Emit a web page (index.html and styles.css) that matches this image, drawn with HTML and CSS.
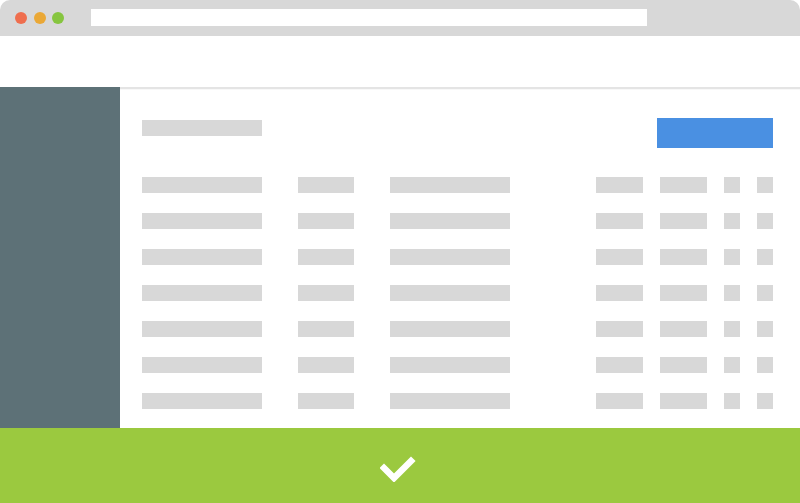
FILE: index.html
```html
<!DOCTYPE html>
<html>
<head>
<meta charset="utf-8">
<link rel="stylesheet" href="styles.css">
</head>
<body>
<div class="window">
  <div class="chrome">
    <div class="dots">
      <span class="dot red"></span>
      <span class="dot orange"></span>
      <span class="dot green"></span>
    </div>
    <div class="address"></div>
  </div>
  <div class="header"></div>
  <div class="body">
    <div class="sidebar"></div>
    <div class="main">
      <div class="toolbar">
        <div class="title bar"></div>
        <div class="button"></div>
      </div>
      <div class="rows">
        <div class="row"><div class="left"><span class="bar w120"></span><span class="bar w56"></span><span class="bar w120"></span></div><div class="right"><span class="bar w47"></span><span class="bar w47"></span><span class="bar w16"></span><span class="bar w16"></span></div></div>
        <div class="row"><div class="left"><span class="bar w120"></span><span class="bar w56"></span><span class="bar w120"></span></div><div class="right"><span class="bar w47"></span><span class="bar w47"></span><span class="bar w16"></span><span class="bar w16"></span></div></div>
        <div class="row"><div class="left"><span class="bar w120"></span><span class="bar w56"></span><span class="bar w120"></span></div><div class="right"><span class="bar w47"></span><span class="bar w47"></span><span class="bar w16"></span><span class="bar w16"></span></div></div>
        <div class="row"><div class="left"><span class="bar w120"></span><span class="bar w56"></span><span class="bar w120"></span></div><div class="right"><span class="bar w47"></span><span class="bar w47"></span><span class="bar w16"></span><span class="bar w16"></span></div></div>
        <div class="row"><div class="left"><span class="bar w120"></span><span class="bar w56"></span><span class="bar w120"></span></div><div class="right"><span class="bar w47"></span><span class="bar w47"></span><span class="bar w16"></span><span class="bar w16"></span></div></div>
        <div class="row"><div class="left"><span class="bar w120"></span><span class="bar w56"></span><span class="bar w120"></span></div><div class="right"><span class="bar w47"></span><span class="bar w47"></span><span class="bar w16"></span><span class="bar w16"></span></div></div>
        <div class="row"><div class="left"><span class="bar w120"></span><span class="bar w56"></span><span class="bar w120"></span></div><div class="right"><span class="bar w47"></span><span class="bar w47"></span><span class="bar w16"></span><span class="bar w16"></span></div></div>
      </div>
    </div>
  </div>
  <div class="footer">
    <svg class="check" width="40" height="32" viewBox="0 0 40 32">
      <polyline points="4,18 14,28 31,11" fill="none" stroke="#ffffff" stroke-width="6.5" stroke-linecap="square" stroke-linejoin="miter"/>
    </svg>
  </div>
</div>
</body>
</html>
```
FILE: styles.css
```css
html, body {
  margin: 0;
  padding: 0;
  background: #ffffff;
}
.window {
  width: 800px;
  height: 503px;
  display: flex;
  flex-direction: column;
  overflow: hidden;
  border-radius: 10px 10px 0 0;
}
.chrome {
  height: 36px;
  flex: none;
  background: #d8d8d8;
  display: flex;
  align-items: flex-start;
}
.dots {
  display: flex;
  gap: 6.5px;
  padding: 12px 0 0 15px;
}
.dot {
  width: 12px;
  height: 12px;
  border-radius: 50%;
  display: block;
}
.red { background: #ef6e4e; }
.orange { background: #eaa836; }
.green { background: #86c53f; }
.address {
  margin: 9px 0 0 27px;
  width: 556px;
  height: 17px;
  background: #ffffff;
}
.header {
  height: 51px;
  flex: none;
  background: #ffffff;
}
.body {
  flex: 1;
  display: flex;
  min-height: 0;
}
.sidebar {
  width: 120px;
  flex: none;
  background: #5d7177;
}
.main {
  flex: 1;
  border-top: 2px solid #e4e4e4;
  box-shadow: inset 0 1px 1px rgba(0,0,0,0.03);
  padding: 29px 27px 0 22px;
}
.toolbar {
  display: flex;
  justify-content: space-between;
  align-items: flex-start;
  height: 30px;
}
.bar {
  display: block;
  height: 16px;
  background: #d8d8d8;
}
.title {
  width: 120px;
  margin-top: 2px;
}
.button {
  width: 116px;
  height: 30px;
  background: #4a90e2;
}
.rows {
  margin-top: 29px;
  display: flex;
  flex-direction: column;
  gap: 20px;
}
.row {
  display: flex;
  justify-content: space-between;
}
.left {
  display: flex;
  gap: 36px;
}
.right {
  display: flex;
  gap: 17px;
}
.w120 { width: 120px; }
.w56 { width: 56px; }
.w47 { width: 47px; }
.w16 { width: 16px; }
.footer {
  height: 75px;
  flex: none;
  background: #9bc93f;
  display: flex;
  align-items: center;
  justify-content: center;
}
.check {
  display: block;
}
```
